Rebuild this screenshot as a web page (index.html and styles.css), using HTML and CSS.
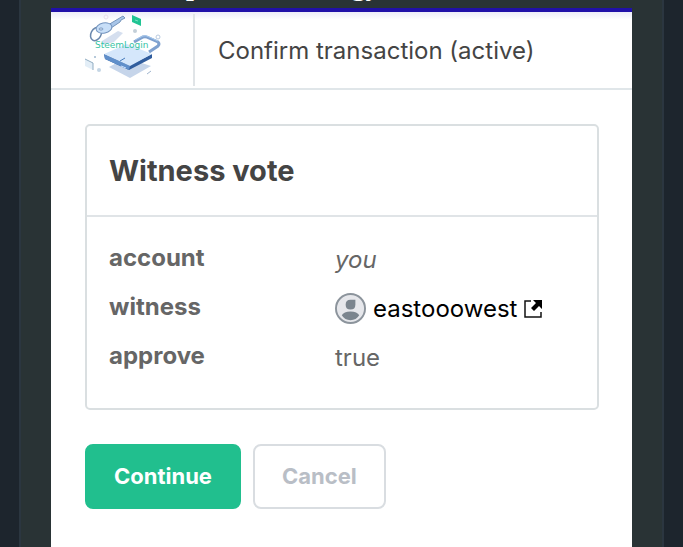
FILE: index.html
```html
<!DOCTYPE html>
<html lang="en">
<head>
    <meta charset="UTF-8">
    <meta name="viewport" content="width=device-width, initial-scale=1.0">
    <title>SteemLogin</title>
    <link rel="stylesheet" href="styles.css">
</head>
<body>
    <div class="page">
        <p class="page-title"><span>p</span><span>gy</span></p>
        <main class="dialog">
            <header class="dialog-header">
                <div class="logo">
                    <svg class="logo-img" viewBox="1 3 85 67" role="img" aria-label="SteemLogin">
                        <!-- shadows -->
                        <path d="M29 56 L46 47 L71 55 L50 67 Z" fill="#c6d5ea"/>
                        <path d="M22 30 L38 20 L43 22 L34 31 L23 34 Z" fill="#d5dfef"/>
                        <!-- key -->
                        <ellipse cx="16" cy="23" rx="5" ry="7" transform="rotate(28 16 23)" fill="none" stroke="#6b88ad" stroke-width="1.5"/>
                        <path d="M28 14 L43 5 L45 7 L41 9 L40 11 L31 17 Z" fill="#a8c5e8" stroke="#7595bc"/>
                        <ellipse cx="24" cy="17" rx="8" ry="5" transform="rotate(-12 24 17)" fill="#c8dff8" stroke="#7394bf"/>
                        <ellipse cx="21" cy="18" rx="2" ry="1" fill="#fff" stroke="#7394bf"/>
                        <!-- padlock -->
                        <path d="M54 31 L63 26 Q66 25 69 27 L78 31 Q80 33 78 35 L69 41" fill="none" stroke="#7fa1cf" stroke-width="3"/>
                        <path d="M55 29 L63 25 Q66 24 69 26 L78 30" fill="none" stroke="#a7c9ee"/>
                        <path d="M24 43 L50 54 L72 43 L72 47 L49 59 L25 48 Z" fill="#315d9d"/>
                        <path d="M24 43 L50 55 L49 59 L25 48 Z" fill="#608fca"/>
                        <path d="M24 43 L47 33 L72 43 L50 55 Z" fill="#d5e7fb"/>
                        <path d="M40 50 L45 47" stroke="#477bbb"/>
                        <path d="M41 55 L46 57" stroke="#c9e1ff"/>
                        <!-- floating bits -->
                        <path d="M52 4 L61 8 V15 L52 11 Z" fill="#20c493"/>
                        <path d="M55 9 L58 10" stroke="#79dfc1"/>
                        <path d="M5 48 L13 52 V59 L5 55 Z" fill="#e3eef7"/>
                        <path d="M5 48 L13 52 V59" fill="none" stroke="#91adc2"/>
                        <circle cx="55" cy="20" r="2" fill="#c3cfd8"/>
                        <circle cx="78" cy="26" r="2" fill="none" stroke="#b9cadf"/>
                        <circle cx="19" cy="59" r="2" fill="#c5d6e5"/>
                        <circle cx="15" cy="46" r="1" fill="#9eb7ce"/>
                        <circle cx="26" cy="6" r="2" fill="none" stroke="#eadfed"/>
                        <path d="M67 63 L71 60" stroke="#a0b5ce"/>
                        <text class="logo-text" x="15" y="37">SteemLogin</text>
                    </svg>
                </div>
                <h1 class="dialog-title">Confirm transaction (active)</h1>
            </header>
            <div class="dialog-body">
                <section class="card">
                    <h2 class="card-title">Witness vote</h2>
                    <dl class="details">
                        <dt>account</dt>
                        <dd><em>you</em></dd>
                        <dt>witness</dt>
                        <dd>
                            <a class="user" href="#">
                                <svg class="avatar" viewBox="0 0 32 32" aria-hidden="true">
                                    <circle cx="16" cy="16" r="15" fill="#e6e7eb" stroke="#8c949c" stroke-width="2"/>
                                    <path d="M11 12 Q11 7 16 7 H21 V12 Q21 17 16 17 Q11 17 11 12 Z" fill="#7b858e"/>
                                    <path d="M7 23 Q9 19 16 19 Q23 19 25 23 Q22 28 16 28 Q10 28 7 23 Z" fill="#7b858e"/>
                                </svg>
                                <span>eastooowest</span>
                                <svg class="external" viewBox="0 0 18 18" aria-hidden="true">
                                    <path d="M7 1 H1 V17 H17 V12" fill="none" stroke="#111" stroke-width="1.5"/>
                                    <path d="M9 0 H18 V9 L15 6 L10 11 L7 8 L12 3 Z" fill="#000"/>
                                </svg>
                            </a>
                        </dd>
                        <dt>approve</dt>
                        <dd>true</dd>
                    </dl>
                </section>
                <div class="actions">
                    <button type="button" class="btn btn-primary">Continue</button>
                    <button type="button" class="btn">Cancel</button>
                </div>
            </div>
        </main>
    </div>
</body>
</html>
```
FILE: styles.css
```css
* {
    box-sizing: border-box;
}
body {
    margin: 0;
    padding: 0 19px;
    background-color: #1d252d;
    font-family: Inter, "Liberation Sans", sans-serif;
    color: #666;
}
.page {
    display: flex;
    flex-direction: column;
    min-height: 100vh;
    padding: 0 30px;
    border: solid #2b3640;
    border-width: 0 2px;
    background-color: #293335;
}
/* scrolled out of view, only the descenders show */
.page-title {
    display: flex;
    align-items: flex-end;
    gap: 150px;
    height: 8px;
    margin: 0;
    padding: 0 0 8px 135px;
    font-family: "Liberation Serif", serif;
    font-size: 28px;
    font-weight: 700;
    line-height: 28px;
    color: #fff;
}
.dialog {
    flex: 1;
    border-top: 4px solid #2010a8;
    background-color: #fff;
}
.dialog-header {
    display: flex;
    align-items: center;
    height: 78px;
    border-bottom: 2px solid #e0e6e9;
    background: linear-gradient(#ececf8, #fff 8px);
}
.logo {
    align-self: stretch;
    width: 144px;
    margin: 2px 0;
    padding-left: 30px;
    border-right: 2px solid #e0e4e7;
}
.logo-img {
    display: block;
    width: 85px;
    height: 67px;
    overflow: visible;
}
.logo-text {
    font-family: "DejaVu Sans", sans-serif;
    font-size: 9px;
    fill: #35c3a4;
}
.dialog-title {
    margin: 0;
    padding-left: 23px;
    font-size: 24px;
    font-weight: 400;
    color: #444;
}
.dialog-body {
    padding: 34px 33px 34px 34px;
}
.card {
    border: 2px solid #dadfe1;
    border-radius: 5px;
}
.card-title {
    margin: 0;
    padding: 0 22px;
    border-bottom: 2px solid #e0e4e7;
    font-size: 29px;
    font-weight: 700;
    line-height: 89px;
    color: #444;
}
.details {
    display: grid;
    grid-template-columns: 226px 1fr;
    margin: 0;
    padding: 18px 22px 26px;
    font-size: 24px;
    line-height: 49px;
}
.details dt {
    font-weight: 700;
    line-height: 45px;
}
.details dd {
    margin: 0;
}
.user {
    display: flex;
    align-items: center;
    gap: 7px;
    color: #000;
    text-decoration: none;
}
.avatar {
    width: 31px;
    height: 31px;
}
.external {
    width: 18px;
    height: 18px;
}
.actions {
    display: flex;
    gap: 12px;
    margin-top: 34px;
}
.btn {
    padding: 0 27px;
    border: 2px solid #d9dde1;
    border-radius: 8px;
    background-color: #fff;
    font-family: inherit;
    font-size: 22px;
    font-weight: 700;
    line-height: 61px;
    color: #b9bec6;
    cursor: pointer;
}
.btn-primary {
    border-color: #21bf8e;
    background-color: #21bf8e;
    color: #fff;
}
```
